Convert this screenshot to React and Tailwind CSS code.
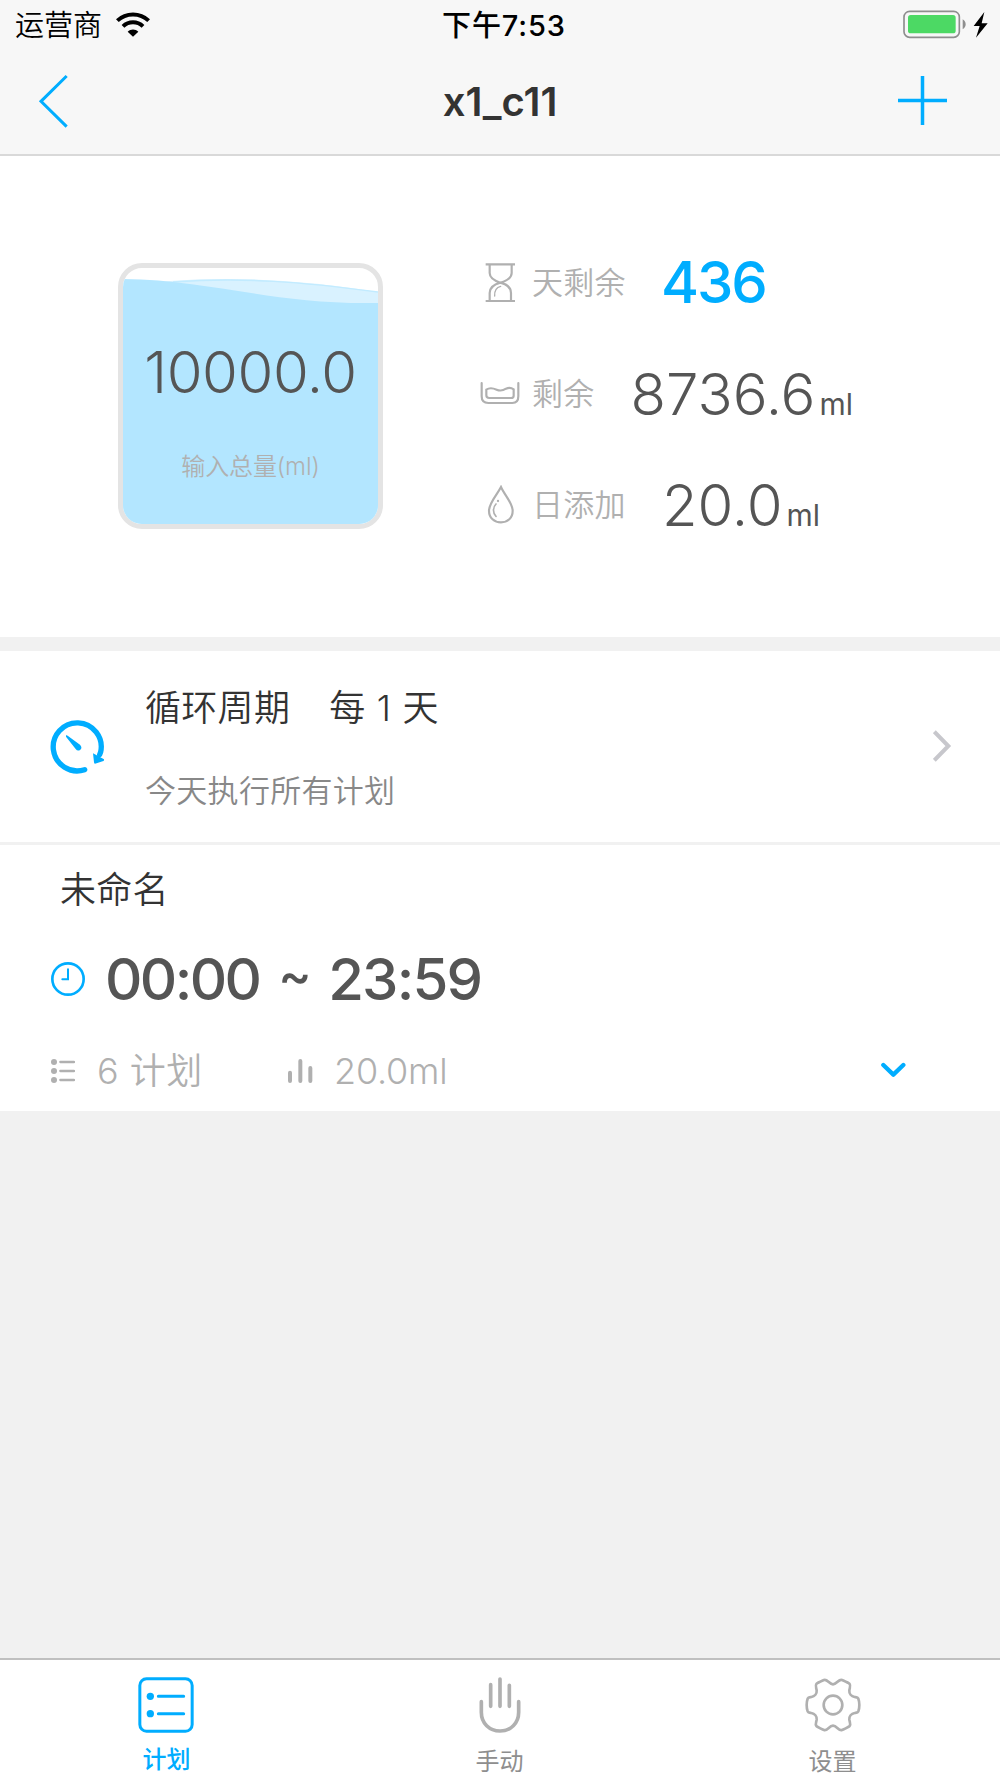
import clsx from 'clsx';

function WifiIcon() {
    return (
        <svg className="mb-[2px] h-[25px] w-[34px]" viewBox="0 0 102 75" fill="none" stroke="#000">
            <path d="M4 26C30 1 72 1 98 26" strokeWidth="12" />
            <path d="M21 43C38 27 64 27 81 43" strokeWidth="12" />
            <path d="M51 74L35 59C44 50 58 50 67 59Z" fill="#000" stroke="none" />
        </svg>
    );
}

function BatteryIcon() {
    return (
        <svg className="mb-[2px] h-[29px] w-[86px]" viewBox="0 0 258 87" fill="none">
            <rect x="3" y="4" width="166" height="78" rx="17" stroke="#8e8e8e" strokeWidth="5" />
            <rect x="15" y="15" width="143" height="55" rx="8" fill="#4cd964" />
            <path d="M179 28C191 35 191 51 179 58Z" fill="#8e8e8e" />
            <path d="M244 6L212 48H230L219 83L254 40H236Z" fill="#000" />
        </svg>
    );
}

function HourglassIcon() {
    return (
        <svg className="h-[40px] w-[40px]" viewBox="0 0 120 120" fill="none" stroke="#b0b0b0" strokeWidth="6.500">
            <path d="M17 4H105M17 114H105" />
            <path d="M29 6V30C29 45 43 53 61 59C81 53 95 45 95 30V6M29 112V90C29 73 43 64 61 59C81 64 93 73 93 90V112" />
            <path d="M44 99C43 81 49 73 62 70" strokeWidth="4" strokeLinecap="round" />
        </svg>
    );
}

function TrayIcon() {
    return (
        <svg className="h-[40px] w-[40px]" viewBox="0 0 120 120" fill="none" stroke="#b0b0b0" strokeWidth="6.500" strokeLinecap="round">
            <path d="M5 27V67C5 80 12 87 25 87H97C109 87 115 80 115 67V27" />
            <path d="M19 47C30 39 39 42 50 47C61 52 69 50 78 44C85 41 94 41 101 46V65C101 69 98 72 93 72H28C22 72 19 69 19 64Z" />
        </svg>
    );
}

function DropIcon() {
    return (
        <svg className="h-[40px] w-[40px]" viewBox="0 0 120 120" fill="none" stroke="#b0b0b0" strokeWidth="6.500">
            <path d="M63 6C50 31 27 54 27 77C27 99 43 112 63 112C83 112 98 99 98 77C98 54 74 31 63 6Z" />
            <path d="M48 94C38 85 38 67 48 57" strokeWidth="5" strokeLinecap="round" />
            <circle cx="54" cy="48" r="3.500" fill="#b0b0b0" stroke="none" />
        </svg>
    );
}

function CycleIcon() {
    return (
        <svg className="mt-[2px] h-[54px] w-[54px]" viewBox="0 0 162 162" fill="none" stroke="#00adff">
            <path d="M104 149A72 72 0 1 1 152 96L149 104" strokeWidth="16" strokeLinecap="round" />
            <path d="M129 100L162 118Q163 123 158 124L135 131Q132 131 132 127Z" fill="#00adff" stroke="none" />
            <path d="M48 46Q51 45 53 47L90 74Q98 83 91 89Q83 95 77 87L48 50Z" fill="#00adff" stroke="none" />
        </svg>
    );
}

function GearIcon() {
    return (
        <svg className="h-[56px] w-[56px]" viewBox="195 81 168 168" fill="none" stroke="#b0b0b0" strokeWidth="8" strokeLinejoin="round">
            <path d="M200 165C200 157 201 151 203 146C205 142 210 142 214 141C224 139 231 131 230 121C229 114 225 107 229 102C233 98 243 94 252 90C262 86 267 103 279 103C291 103 296 86 306 90C315 94 325 98 329 102C333 107 329 114 328 121C327 131 334 139 344 141C348 142 353 142 355 146C357 151 358 157 358 165C358 173 357 179 355 184C353 188 348 188 344 189C334 191 327 199 328 209C329 216 333 223 329 228C325 232 315 236 306 240C296 244 291 227 279 227C267 227 262 244 252 240C243 236 233 232 229 228C225 223 229 216 230 209C231 199 224 191 214 189C210 188 205 188 203 184C201 179 200 173 200 165Z" />
            <circle cx="279" cy="165" r="28" />
        </svg>
    );
}

function PlanIcon() {
    return (
        <svg className="mr-px h-[56px] w-[56px]" viewBox="0 0 168 168" fill="none" stroke="#00adff" strokeWidth="9" strokeLinecap="round">
            <rect x="5.500" y="5.500" width="157" height="157" rx="20" />
            <path d="M61 58H137M61 110H137" />
            <circle cx="37" cy="58" r="11" fill="#00adff" stroke="none" />
            <circle cx="37" cy="110" r="11" fill="#00adff" stroke="none" />
        </svg>
    );
}

function HandIcon() {
    return (
        <svg className="h-[56px] w-[56px]" viewBox="0 0 168 168" fill="none" stroke="#b0b0b0" strokeWidth="11" strokeLinecap="round">
            <path d="M28 74V106C28 139 52 162 84 162C116 162 140 139 140 106V74M56 23V88M84 6V88M112 25V88" />
        </svg>
    );
}

const stats = [
    { label: '天剩余', value: '436', icon: <HourglassIcon />, highlight: true },
    { label: '剩余', value: '8736.6', unit: 'ml', icon: <TrayIcon /> },
    { label: '日添加', value: '20.0', unit: 'ml', icon: <DropIcon /> }
];

const tabs = [
    { label: '计划', icon: <PlanIcon />, active: true },
    { label: '手动', icon: <HandIcon /> },
    { label: '设置', icon: <GearIcon /> }
];

function StatusBar() {
    return (
        <div className="grid h-[50px] grid-cols-3 items-center pr-[11px] pl-[15px] text-[29px] leading-none text-black">
            <div className="flex items-center gap-[14px]">
                <span className="h-[29px] font-[350]">运营商</span>
                <WifiIcon />
            </div>
            <span className="pl-[4px] text-center font-medium tracking-[0.9px]">下午7:53</span>
            <div className="flex justify-end">
                <BatteryIcon />
            </div>
        </div>
    );
}

function NavBar() {
    return (
        <div className="grid h-[101px] grid-cols-3 items-center pr-[53px] pl-[38px]">
            <svg className="h-[54px] w-[31px]" viewBox="0 0 93 162" fill="none" stroke="#00adff" strokeWidth="9">
                <path d="M86 6L9 82L86 158" />
            </svg>
            <h1 className="pt-[3px] pl-[15px] text-center text-[40px] leading-none font-semibold text-[#333]">x1_c11</h1>
            <svg className="h-[49px] w-[49px] justify-self-end" viewBox="0 0 49 49" stroke="#00adff" strokeWidth="3.500">
                <path d="M0 24.500H49M24.500 0V49" />
            </svg>
        </div>
    );
}

function Container() {
    return (
        <div className="relative h-[266px] w-[265px] overflow-hidden rounded-[24px] border-[5px] border-[#e4e4e4]">
            <svg className="absolute inset-0 h-full w-full" viewBox="0 0 255 256" preserveAspectRatio="none">
                <path d="M0 19C60 8 150 7 255 24V256H0Z" fill="#d9f2ff" />
                <path d="M50 14C120 9 180 14 255 24" fill="none" stroke="#c2ebff" strokeWidth="1.500" />
                <path d="M0 11C90 12 150 37 255 35V256H0Z" fill="#b3e6ff" />
            </svg>
            <div className="relative flex flex-col items-center pt-[75px] leading-none">
                <span className="text-[58px] font-[360] tracking-[-0.4px] text-[#555]">10000.0</span>
                <span className="mt-[54px] text-[24px] font-[350] tracking-[-0.1px] text-[#b0b0b0]">输入总量(ml)</span>
            </div>
        </div>
    );
}

function Stat({ label, value, unit, icon, highlight }) {
    return (
        <div className="flex h-[111px] items-center leading-none">
            {icon}
            <span className="ml-[12px] text-[31px] font-[350] tracking-[0.3px] text-[#b0b0b0]">{label}</span>
            <div className="ml-[36px] flex items-baseline">
                <span
                    className={clsx(
                        'text-[58px]',
                        highlight ? '-ml-px pb-[2px] font-medium tracking-[-2px] text-[#00adff]' : 'font-[360] text-[#555]'
                    )}
                >
                    {value}
                </span>
                {unit && <span className="ml-[4px] text-[30px] text-[#555]">{unit}</span>}
            </div>
        </div>
    );
}

export default function App() {
    return (
        <div className="flex h-[1778px] w-[1000px] flex-col overflow-hidden bg-[#f1f1f1] font-[Inter,'Noto_Sans_CJK_SC',sans-serif]">
            <header className="h-[156px] border-b-2 border-[#d9d9d9] bg-[#f7f7f7]">
                <StatusBar />
                <NavBar />
            </header>

            {/* Liquid overview */}
            <section className="flex h-[481px] items-start bg-white pl-[118px]">
                <div className="mt-[107px]">
                    <Container />
                </div>
                <div className="mt-[71px] ml-[97px]">
                    {stats.map((item) => (
                        <Stat key={item.label} {...item} />
                    ))}
                </div>
            </section>

            {/* Cycle */}
            <section className="mt-[14px] flex h-[191px] items-center bg-white pr-[48px] pb-px pl-[50px] leading-none">
                <CycleIcon />
                <div className="ml-[41px] flex-1 pt-[4px]">
                    <div className="flex text-[36px] font-[350] tracking-[0.3px] text-[#333]">
                        <span>循环周期</span>
                        <span className="ml-[39px] tracking-[0.7px]">每 1 天</span>
                    </div>
                    <p className="mt-[49px] text-[31px] font-[350] tracking-[0.3px] text-[#888]">今天执行所有计划</p>
                </div>
                <svg className="h-[32px] w-[19px]" viewBox="0 0 57 96" fill="none" stroke="#c7c7cc" strokeWidth="12">
                    <path d="M4 5L46 48L4 91" />
                </svg>
            </section>

            {/* Plan group */}
            <section className="mt-[3px] h-[266px] bg-white pl-[51px] leading-none">
                <h2 className="pt-[27px] pl-[9px] text-[36px] font-[350] tracking-[0.3px] text-[#333]">未命名</h2>
                <div className="mt-[41px] flex h-[60px] items-center">
                    <svg className="h-[34px] w-[34px]" viewBox="0 0 102 102" fill="none" stroke="#00adff" strokeWidth="8">
                        <circle cx="51" cy="51" r="47" />
                        <path d="M34 52H51V22" strokeWidth="6" strokeLinecap="round" />
                    </svg>
                    <div className="ml-[20px] flex items-center text-[58px] font-medium tracking-[-2.600px] text-[#555]">
                        <span>00:00</span>
                        <span className="mb-[9px] ml-[19px] text-[50px]">~</span>
                        <span className="ml-[19px] tracking-[-1.800px]">23:59</span>
                    </div>
                </div>
                <div className="mt-[42px] flex h-[40px] items-center text-[36px] font-[350] text-[#b0b0b0]">
                    <svg className="mb-px h-[26px] w-[24px]" viewBox="0 0 72 78" stroke="#b0b0b0" strokeWidth="7" strokeLinecap="round">
                        <path d="M28 12H69M28 39H69M28 66H69" />
                        <g fill="#b0b0b0" stroke="none">
                            <circle cx="9" cy="12" r="9" />
                            <circle cx="9" cy="39" r="9" />
                            <circle cx="9" cy="66" r="9" />
                        </g>
                    </svg>
                    <span className="ml-[22px] w-[190px] tracking-[0.5px]">6 计划</span>
                    <svg className="mb-px h-[26px] w-[26px]" viewBox="0 0 78 78" stroke="#b0b0b0" strokeWidth="12" strokeLinecap="round">
                        <path d="M9 44V69M40 9V69M70 30V69" />
                    </svg>
                    <span className="ml-[21px] flex-1 tracking-[-0.2px]">20.0ml</span>
                    <svg className="mr-[94px] mb-[2px] h-[16px] w-[25px]" viewBox="0 0 75 48" fill="none" stroke="#00adff" strokeWidth="13" strokeLinecap="round" strokeLinejoin="round">
                        <path d="M7 9L37 38L67 9" />
                    </svg>
                </div>
            </section>

            <nav className="mt-auto grid h-[120px] grid-cols-3 border-t-2 border-[#c0c0c0] bg-white pr-px leading-none">
                {tabs.map((tab) => (
                    <div key={tab.label} className="flex flex-col items-center pt-[17px]">
                        {tab.icon}
                        <span
                            className={clsx(
                                'text-[24px]',
                                tab.active ? 'mt-[15px] font-medium text-[#00adff]' : 'mt-[17px] text-[#8e8e8e]'
                            )}
                        >
                            {tab.label}
                        </span>
                    </div>
                ))}
            </nav>
        </div>
    );
}
